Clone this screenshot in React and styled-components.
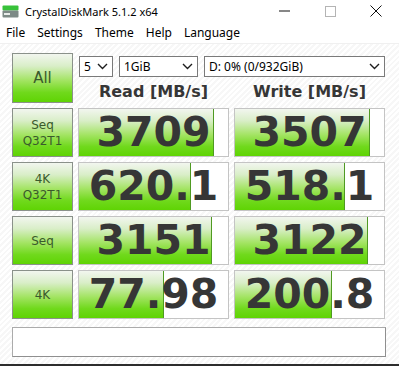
import React from 'react'
import styled, { createGlobalStyle } from 'styled-components'

const GlobalStyle = createGlobalStyle`
  html, body {
    margin: 0;
    padding: 0;
  }
  body {
    width: 399px;
    height: 366px;
    overflow: hidden;
    background: #fff;
    font-family: "Noto Sans", "DejaVu Sans", sans-serif;
  }
`

const greenFill = `linear-gradient(
  to bottom,
  #f2f6ef 0%,
  #d9eec8 25%,
  #a3e463 55%,
  #70d91c 80%,
  #5fd404 100%
)`

const Window = styled.div`
  width: 399px;
  height: 366px;
  box-sizing: border-box;
  display: flex;
  flex-direction: column;
  border-bottom: 2px solid #2d2d2d;
`

const TitleBar = styled.div`
  height: 22px;
  display: flex;
  align-items: center;
  background: #fff;
`

const Title = styled.span`
  margin-left: 5px;
  font-size: 11px;
  color: #000;
`

const Controls = styled.div`
  margin-left: auto;
  height: 100%;
  display: flex;
`

const ControlButton = styled.div`
  width: 46px;
  height: 100%;
  display: flex;
  align-items: center;
  justify-content: center;
`

const MenuBar = styled.div`
  height: 21px;
  display: flex;
  align-items: center;
  background: #fff;
  border-bottom: 1px solid #f0f0f0;
`

const MenuItem = styled.span`
  padding: 0 6px;
  font-size: 12px;
  color: #000;
`

const Panel = styled.div`
  flex: 1;
  padding: 9px 0 0 12px;
  background: repeating-linear-gradient(135deg, #ffffff 0 2px, #f7f7f7 2px 4px);
`

const Top = styled.div`
  display: flex;
  gap: 5px;
  margin-bottom: 5px;
`

const AllButton = styled.div`
  width: 61px;
  height: 50px;
  box-sizing: border-box;
  border: 1px solid #8a918a;
  background: ${greenFill};
  display: flex;
  align-items: center;
  justify-content: center;
  font-family: "DejaVu Sans", sans-serif;
  font-size: 15px;
  color: #3a5a2c;
`

const Controls2 = styled.div`
  display: flex;
  flex-direction: column;
`

const SelectRow = styled.div`
  display: flex;
  gap: 6px;
  margin: 3px 0 0 1px;
`

const Select = styled.div`
  width: ${({ w }) => w}px;
  height: 21px;
  box-sizing: border-box;
  border: 1px solid #7a7a7a;
  background: #fff;
  display: flex;
  align-items: center;
  justify-content: space-between;
  padding: 0 4px 0 4px;
  font-size: 12px;
  color: #000;
`

const HeaderRow = styled.div`
  display: grid;
  grid-template-columns: 151px 151px;
  column-gap: 5px;
  margin-top: 5px;
`

const Header = styled.div`
  text-align: center;
  font-family: "DejaVu Sans", sans-serif;
  font-weight: bold;
  font-size: 16px;
  line-height: 20px;
  color: #363636;
`

const Rows = styled.div`
  display: flex;
  flex-direction: column;
  gap: 5px;
`

const Row = styled.div`
  display: grid;
  grid-template-columns: 61px 151px 151px;
  column-gap: 5px;
  height: 49px;
`

const Label = styled.div`
  box-sizing: border-box;
  border: 1px solid #8a918a;
  background: ${greenFill};
  display: flex;
  flex-direction: column;
  align-items: center;
  justify-content: center;
  font-family: "DejaVu Sans", sans-serif;
  font-size: 12px;
  line-height: 16px;
  color: #3a5a2c;
`

const Cell = styled.div`
  position: relative;
  box-sizing: border-box;
  border: 1px solid #c4c4c4;
  background: #fff;
  overflow: hidden;
  display: flex;
  align-items: center;
  justify-content: center;
`

const Fill = styled.div`
  position: absolute;
  left: 0;
  top: 0;
  bottom: 0;
  box-sizing: border-box;
  background: ${greenFill};
  border-right: 1px solid #4f9a22;
`

const Value = styled.span`
  position: relative;
  font-family: "DejaVu Sans", sans-serif;
  font-weight: bold;
  font-size: 41px;
  line-height: 1;
  color: #363636;
`

const Comment = styled.div`
  margin-top: 8px;
  width: 374px;
  height: 30px;
  box-sizing: border-box;
  border: 1px solid #ababab;
  border-right-color: #8f8f8f;
  border-bottom-color: #8f8f8f;
  background: #fff;
`

function AppIcon() {
  return (
    <svg width="18" height="13" viewBox="0 0 18 13" style={{ marginLeft: 2 }}>
      <rect x="0.5" y="0.5" width="16" height="5" rx="1" fill="#38c23a" />
      <rect x="0.5" y="5.5" width="16" height="7" rx="1" fill="#7d8a86" />
      <rect x="2" y="8" width="6" height="2" fill="#e8ecea" />
    </svg>
  )
}

function Chevron() {
  return (
    <svg width="11" height="7" viewBox="0 0 11 7">
      <polyline points="1,1 5.5,5.5 10,1" fill="none" stroke="#1e1e1e" strokeWidth="1.4" />
    </svg>
  )
}

const results = [
  { label: ['Seq', 'Q32T1'], read: '3709', write: '3507' },
  { label: ['4K', 'Q32T1'], read: '620.1', write: '518.1' },
  { label: ['Seq'], read: '3151', write: '3122' },
  { label: ['4K'], read: '77.98', write: '200.8' },
]

// bar length is logarithmic in the score
const barWidth = (v) => Math.round(151 * (0.2 * Math.log10(parseFloat(v)) + 0.19)) - 1

function ScoreCell({ value }) {
  return (
    <Cell>
      <Fill style={{ width: barWidth(value) }} />
      <Value>{value}</Value>
    </Cell>
  )
}

export default function App() {
  return (
    <Window>
      <GlobalStyle />
      <TitleBar>
        <AppIcon />
        <Title>CrystalDiskMark 5.1.2 x64</Title>
        <Controls>
          <ControlButton>
            <svg width="11" height="2" viewBox="0 0 11 2">
              <rect x="0" y="0.5" width="11" height="1" fill="#111" />
            </svg>
          </ControlButton>
          <ControlButton>
            <svg width="11" height="11" viewBox="0 0 11 11">
              <rect x="0.5" y="0.5" width="10" height="10" fill="none" stroke="#b4b4b4" />
            </svg>
          </ControlButton>
          <ControlButton>
            <svg width="12" height="12" viewBox="0 0 12 12">
              <path d="M0.5 0.5 L11.5 11.5 M11.5 0.5 L0.5 11.5" stroke="#111" strokeWidth="1" />
            </svg>
          </ControlButton>
        </Controls>
      </TitleBar>
      <MenuBar>
        <MenuItem>File</MenuItem>
        <MenuItem>Settings</MenuItem>
        <MenuItem>Theme</MenuItem>
        <MenuItem>Help</MenuItem>
        <MenuItem>Language</MenuItem>
      </MenuBar>
      <Panel>
        <Top>
          <AllButton>All</AllButton>
          <Controls2>
            <SelectRow>
              <Select w={34}>
                <span>5</span>
                <Chevron />
              </Select>
              <Select w={79}>
                <span>1GiB</span>
                <Chevron />
              </Select>
              <Select w={181}>
                <span>D: 0% (0/932GiB)</span>
                <Chevron />
              </Select>
            </SelectRow>
            <HeaderRow>
              <Header>Read [MB/s]</Header>
              <Header>Write [MB/s]</Header>
            </HeaderRow>
          </Controls2>
        </Top>
        <Rows>
          {results.map((r) => (
            <Row key={r.label.join('-')}>
              <Label>
                {r.label.map((l) => (
                  <span key={l}>{l}</span>
                ))}
              </Label>
              <ScoreCell value={r.read} />
              <ScoreCell value={r.write} />
            </Row>
          ))}
        </Rows>
        <Comment />
      </Panel>
    </Window>
  )
}
